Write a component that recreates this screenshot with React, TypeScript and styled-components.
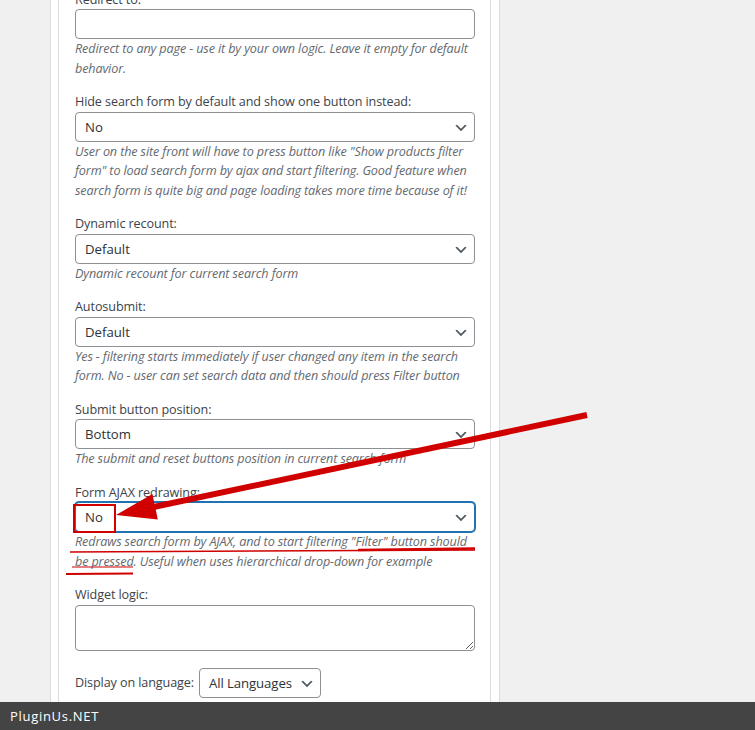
import React from 'react'
import styled, { createGlobalStyle } from 'styled-components'

const GlobalStyle = createGlobalStyle`
    html, body {
        margin: 0;
        padding: 0;
    }
    body {
        background: #f0f0f1;
        font-family: 'Open Sans', 'Noto Sans', sans-serif;
        color: #3c434a;
        overflow: hidden;
    }
    * {
        box-sizing: border-box;
    }
`

const Page = styled.div`
    position: relative;
    width: 755px;
    height: 730px;
    overflow: hidden;
`

const Outer = styled.div`
    width: 450px;
    height: 820px;
    margin: -30px 0 0 50px;
    padding: 0 8px 0 7px;
    background: #fff;
    border: 1px solid #dcdcde;
`

const Card = styled.div`
    height: 100%;
    padding: 17.5px 15px 0 16px;
    border: 1px solid #dcdcde;
    display: flex;
    flex-direction: column;
    gap: 14px;
`

const Field = styled.div`
    display: flex;
    flex-direction: column;
`

const Label = styled.label`
    font-size: 12.6px;
    letter-spacing: -0.1px;
    line-height: 19.5px;
    color: #3c434a;
`

const TextInput = styled.input`
    width: 100%;
    height: 30px;
    border: 1px solid #8c8f94;
    border-radius: 4px;
    background: #fff;
    padding: 0 8px;
    font: inherit;
`

const TextArea = styled.textarea`
    width: 100%;
    height: 46px;
    border: 1px solid #8c8f94;
    border-radius: 4px;
    background: #fff;
    padding: 2px 6px;
    font: inherit;
    display: block;
`

const SelectBox = styled.div<{ $focused?: boolean; $width?: string }>`
    position: relative;
    width: ${(p) => p.$width || '100%'};
    height: 30px;
    display: flex;
    align-items: center;
    padding: 0 24px 0 9px;
    border: 1px solid ${(p) => (p.$focused ? '#2271b1' : '#8c8f94')};
    box-shadow: ${(p) => (p.$focused ? '0 0 0 1px #2271b1' : 'none')};
    border-radius: 4px;
    background: #fff;
    font-size: 13.2px;
    color: #2c3338;
    svg {
        position: absolute;
        right: 5px;
        top: 55%;
        transform: translateY(-50%);
    }
`

const Desc = styled.p`
    margin: 0 -4px 0 0;
    font-size: 12.6px;
    letter-spacing: -0.12px;
    line-height: 19.5px;
    font-style: italic;
    color: #646970;
`

const LangRow = styled.div`
    display: flex;
    align-items: center;
    gap: 5px;
    margin-top: 3px;
    font-size: 12.6px;
    letter-spacing: -0.1px;
`

const Footer = styled.div`
    position: fixed;
    left: 0;
    right: 0;
    bottom: 0;
    height: 28px;
    padding-left: 10px;
    background: #444;
    color: #fff;
    font-size: 13px;
    line-height: 28px;
    letter-spacing: 0.7px;
    z-index: 3;
`

const Annotation = styled.svg`
    position: absolute;
    top: 0;
    left: 0;
    pointer-events: none;
    z-index: 2;
`

const Chevron = () => (
    <svg width="16" height="16" viewBox="0 0 20 20">
        <path d="M5 6l5 5 5-5 2 1-7 7-7-7 2-1z" fill="#50575e" />
    </svg>
)

function Select({ value, focused, width }: { value: string; focused?: boolean; width?: string }) {
    return (
        <SelectBox $focused={focused} $width={width}>
            {value}
            <Chevron />
        </SelectBox>
    )
}

const RED = '#d00000'

export default function App() {
    return (
        <Page>
            <GlobalStyle />
            <Outer>
                <Card>
                    <Field>
                        <Label>Redirect to:</Label>
                        <TextInput type="text" />
                        <Desc>Redirect to any page - use it by your own logic. Leave it empty for default behavior.</Desc>
                    </Field>
                    <Field>
                        <Label>Hide search form by default and show one button instead:</Label>
                        <Select value="No" />
                        <Desc>
                            User on the site front will have to press button like "Show products filter form" to load
                            search form by ajax and start filtering. Good feature when search form is quite big and page
                            loading takes more time because of it!
                        </Desc>
                    </Field>
                    <Field>
                        <Label>Dynamic recount:</Label>
                        <Select value="Default" />
                        <Desc>Dynamic recount for current search form</Desc>
                    </Field>
                    <Field>
                        <Label>Autosubmit:</Label>
                        <Select value="Default" />
                        <Desc>
                            Yes - filtering starts immediately if user changed any item in the search form. No - user can
                            set search data and then should press Filter button
                        </Desc>
                    </Field>
                    <Field>
                        <Label>Submit button position:</Label>
                        <Select value="Bottom" />
                        <Desc>The submit and reset buttons position in current search form</Desc>
                    </Field>
                    <Field>
                        <Label>Form AJAX redrawing:</Label>
                        <Select value="No" focused />
                        <Desc>
                            Redraws search form by AJAX, and to start filtering "Filter" button should be pressed. Useful
                            when uses hierarchical drop-down for example
                        </Desc>
                    </Field>
                    <Field>
                        <Label>Widget logic:</Label>
                        <TextArea />
                    </Field>
                    <LangRow>
                        <span>Display on language:</span>
                        <Select value="All Languages" width="122px" />
                    </LangRow>
                </Card>
            </Outer>

            <Annotation width="755" height="730" viewBox="0 0 755 730">
                <rect x="74" y="505" width="41" height="27" fill="none" stroke={RED} strokeWidth="2" />
                <line x1="587" y1="415" x2="150" y2="507.8" stroke={RED} strokeWidth="6" />
                <polygon points="116,515 152.4,494 157.8,519.4" fill={RED} />
                <path d="M70 552 L475 550" stroke={RED} strokeWidth="1.5" fill="none" />
                <path d="M358 550 L475 548.5" stroke={RED} strokeWidth="2.5" fill="none" />
                <path d="M72 567 L133 567" stroke={RED} strokeWidth="1.2" fill="none" />
                <path d="M66 574 L133 573.5" stroke={RED} strokeWidth="2.2" fill="none" />
            </Annotation>

            <Footer>PluginUs.NET</Footer>
        </Page>
    )
}
